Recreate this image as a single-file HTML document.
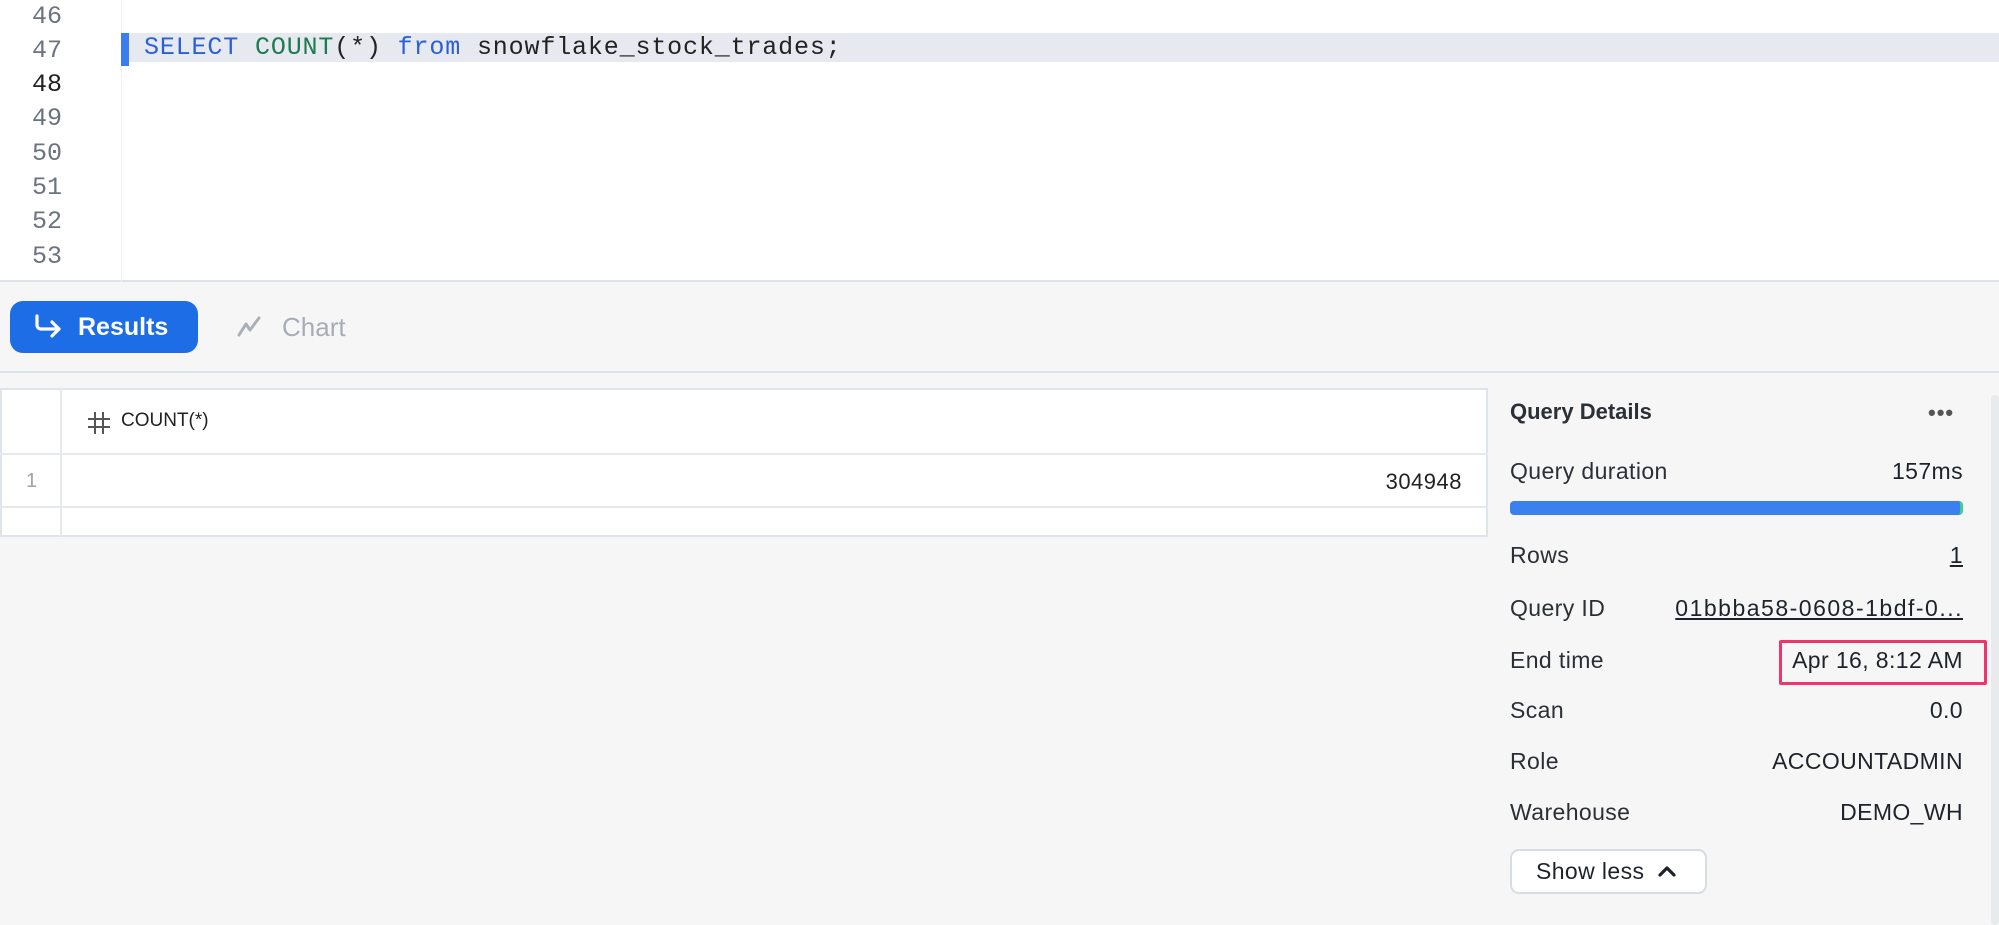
<!DOCTYPE html>
<html><head><meta charset="utf-8"><style>
*{margin:0;padding:0;box-sizing:border-box}
body{width:1999px;height:925px;background:#f6f6f6;font-family:"Liberation Sans",sans-serif;position:relative;overflow:hidden;color:#1e232b}
.ed{position:absolute;left:0;top:0;width:1999px;height:282px;background:#fff;border-bottom:2px solid #dde1e8}
.gut{position:absolute;left:121px;top:0;width:1px;height:282px;background:#eef0f3}
.ln{position:absolute;left:32px;font-family:"Liberation Mono",monospace;font-size:25px;color:#6b7280}
.hl{position:absolute;left:129px;top:33px;width:1870px;height:29px;background:#e6e9f0}
.bar{position:absolute;left:121px;top:33px;width:8px;height:33px;background:#3b7cf0}
.code{position:absolute;left:144px;top:32px;font-family:"Liberation Mono",monospace;font-size:25px;letter-spacing:0.85px;color:#222;line-height:31px;white-space:pre}
.k{color:#2a5fd8}.f{color:#1e7a4f}
.t{position:absolute;font-size:23px;letter-spacing:0.4px;color:#2b2f36}
.r{position:absolute;right:36px;font-size:23px;letter-spacing:0.4px;color:#1e232b}
</style></head><body>
<div class="ed">
<div class="gut"></div>
<div class="hl"></div><div class="bar"></div>
<div class="ln" style="top:2px">46</div>
<div class="ln" style="top:36px">47</div>
<div class="ln" style="top:70px;color:#222">48</div>
<div class="ln" style="top:104px">49</div>
<div class="ln" style="top:139px">50</div>
<div class="ln" style="top:173px">51</div>
<div class="ln" style="top:207px">52</div>
<div class="ln" style="top:242px">53</div>
<div class="code"><span class="k">SELECT</span> <span class="f">COUNT</span>(*) <span class="k">from</span> snowflake_stock_trades;</div>
</div>
<div style="position:absolute;left:10px;top:301px;width:188px;height:52px;background:#1d6de6;border-radius:13px;color:#fff;font-weight:bold;font-size:25px;line-height:52px;padding-left:68px">Results
<svg style="position:absolute;left:22px;top:13px" width="34" height="26" viewBox="0 0 34 26"><path d="M5 2v9a4 4 0 0 0 4 4h18M20 8l7 7-7 7" fill="none" stroke="#fff" stroke-width="3.2" stroke-linecap="round" stroke-linejoin="round"/></svg></div>
<svg style="position:absolute;left:236px;top:315px" width="28" height="24" viewBox="0 0 28 24"><path d="M3 20l7-11 4 6 9-12" fill="none" stroke="#aab0b8" stroke-width="3" stroke-linecap="round" stroke-linejoin="round"/></svg>
<div style="position:absolute;left:282px;top:312px;font-size:26px;color:#a8adb5">Chart</div>
<div style="position:absolute;left:0;top:371px;width:1999px;height:2px;background:#dde1e8"></div>
<div style="position:absolute;left:0;top:388px;width:1488px;height:149px;background:#fff;border:2px solid #dfe3ea"></div>
<div style="position:absolute;left:0;top:453px;width:1488px;height:2px;background:#e6e9ee"></div>
<div style="position:absolute;left:0;top:506px;width:1488px;height:2px;background:#e6e9ee"></div>
<div style="position:absolute;left:60px;top:388px;width:2px;height:149px;background:#e6e9ee"></div>
<svg style="position:absolute;left:86px;top:410px" width="26" height="26" viewBox="0 0 26 26"><path d="M9 2v22M17 2v22M2 9h22M2 17h22" fill="none" stroke="#555" stroke-width="2"/></svg>
<div style="position:absolute;left:121px;top:410px;font-size:19px;color:#222">COUNT(*)</div>
<div style="position:absolute;left:26px;top:470px;font-size:20px;color:#a0a5ad">1</div>
<div style="position:absolute;right:537px;top:469px;font-size:22px;color:#222;letter-spacing:0.5px">304948</div>
<div style="position:absolute;left:1991px;top:395px;width:8px;height:530px;background:#e9eaec;border-radius:4px"></div>
<div class="t" style="left:1510px;top:399px;font-weight:bold;font-size:22px;letter-spacing:0;color:#2b2f36">Query Details</div>
<div style="position:absolute;left:1928px;top:400px;font-size:22px;color:#555;letter-spacing:1px;font-weight:bold">•••</div>
<div class="t" style="left:1510px;top:458px">Query duration</div><div class="r" style="top:458px">157ms</div>
<div style="position:absolute;left:1510px;top:501px;width:453px;height:14px;background:#3b80ef;border-radius:4px;border-right:3px solid #3ecf8e"></div>
<div class="t" style="left:1510px;top:542px">Rows</div><div class="r" style="top:542px;text-decoration:underline">1</div>
<div class="t" style="left:1510px;top:595px">Query ID</div><div class="r" style="top:595px;text-decoration:underline;letter-spacing:1.5px">01bbba58-0608-1bdf-0...</div>
<div class="t" style="left:1510px;top:647px">End time</div><div class="r" style="top:647px">Apr 16, 8:12 AM</div>
<div style="position:absolute;left:1779px;top:640px;width:208px;height:45px;border:3px solid #f0356b;border-radius:2px"></div>
<div class="t" style="left:1510px;top:697px">Scan</div><div class="r" style="top:697px">0.0</div>
<div class="t" style="left:1510px;top:748px">Role</div><div class="r" style="top:748px">ACCOUNTADMIN</div>
<div class="t" style="left:1510px;top:799px">Warehouse</div><div class="r" style="top:799px">DEMO_WH</div>
<div style="position:absolute;left:1510px;top:849px;width:197px;height:45px;background:#fff;border:2px solid #d8dce3;border-radius:9px;font-size:23px;letter-spacing:0.4px;line-height:41px;padding-left:24px;color:#1e232b">Show less
<svg style="position:absolute;left:145px;top:13px" width="20" height="14" viewBox="0 0 20 14"><path d="M3 11l7-7 7 7" fill="none" stroke="#1e232b" stroke-width="3.2" stroke-linecap="round" stroke-linejoin="round"/></svg></div>
</body></html>
